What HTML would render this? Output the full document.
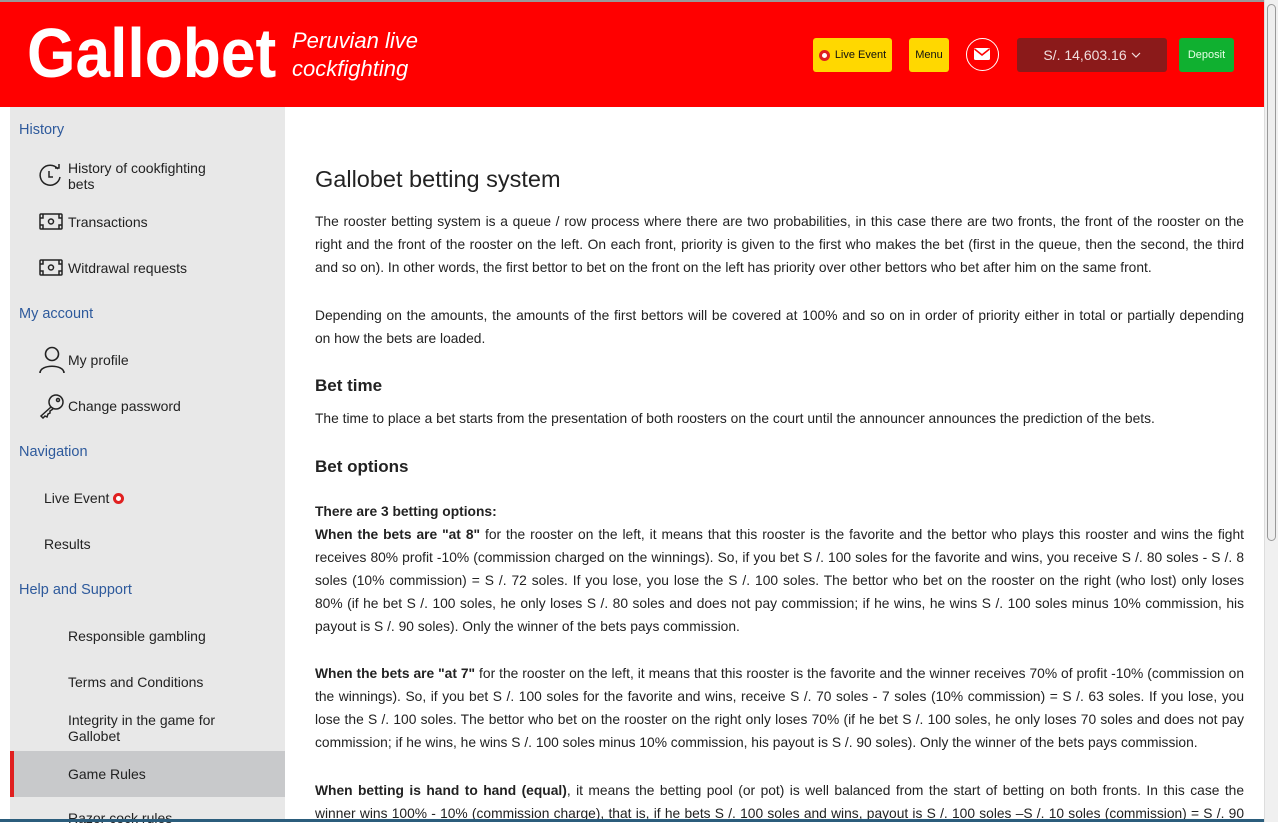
<!DOCTYPE html>
<html><head><meta charset="utf-8"><style>
*{margin:0;padding:0;box-sizing:border-box}
body{width:1278px;height:822px;overflow:hidden;background:#fff;font-family:"Liberation Sans",Arial,sans-serif;position:relative;color:#222}
.top{position:absolute;left:0;top:0;width:1278px;height:2px;background:#999}
.hdr{position:absolute;left:0;top:2px;width:1264px;height:105px;background:#ff0000}
.logo{position:absolute;left:27px;top:11px;color:#fff;font-size:70px;font-weight:bold;line-height:80px;transform:scaleX(0.89);transform-origin:0 0;white-space:nowrap}
.tag{position:absolute;left:292px;top:25px;color:#fff;font-style:italic;font-size:22px;line-height:28px}
.btn{position:absolute;border-radius:3px;font-size:11px;display:flex;align-items:center;justify-content:center}
.sb{position:absolute;left:1264px;top:0;width:14px;height:822px;background:#f0f0f0;border-left:1px solid #ddd}
.thumb{position:absolute;left:1267px;top:4px;width:9px;height:537px;border:1px solid #999;border-radius:5px;background:#eee}
.side{position:absolute;left:10px;top:107px;width:275px;height:715px;background:#e8e8e8}
.s{position:absolute;font-size:14px;color:#222;white-space:nowrap;line-height:16px}
.h{color:#2e5a9c;font-size:14.5px}
.active{position:absolute;left:10px;top:751px;width:275px;height:46px;background:#c8c9cb;border-left:4px solid #e02020}
.c{position:absolute;left:315px;width:929px;font-size:13.8px;color:#222}
.l{height:23px;line-height:23px;text-align:justify;text-align-last:justify;white-space:nowrap;overflow:hidden}
.l.e{text-align:left;text-align-last:left}
.bl{position:absolute;left:0;top:819px;width:1264px;height:3px;background:#2b5d7c}
</style></head><body>
<div class="top"></div>
<div class="hdr">
<div class="logo">Gallobet</div>
<div class="tag">Peruvian live<br>cockfighting</div>
</div>
<div class="btn" style="left:813px;top:38px;width:79px;height:34px;background:#ffd800;color:#111"><span style="display:inline-block;width:11px;height:11px;border-radius:50%;border:3px solid #e02020;background:#fff;margin-right:5px"></span>Live Event</div>
<div class="btn" style="left:909px;top:38px;width:40px;height:34px;background:#ffd800;color:#111">Menu</div>
<div style="position:absolute;left:966px;top:38px;width:33px;height:33px;border:1.5px solid #fff;border-radius:50%"><svg width="30" height="30" viewBox="0 0 30 30" style="position:absolute;left:0;top:0"><rect x="7" y="9" width="16" height="12" rx="1.5" fill="#fff"/><path d="M7.5 10 L15 16 L22.5 10" stroke="#f00" stroke-width="1.6" fill="none"/></svg></div>
<div class="btn" style="left:1017px;top:38px;width:150px;height:34px;background:#8b1a1a;color:#f0dede;font-size:14px">S/. 14,603.16 <svg width="10" height="8" viewBox="0 0 10 8" style="margin-left:4px"><path d="M1 2 L5 6 L9 2" stroke="#f0dede" stroke-width="1.2" fill="none"/></svg></div>
<div class="btn" style="left:1179px;top:38px;width:55px;height:34px;background:#10b030;color:#e8ffe8">Deposit</div>
<div class="sb"></div><div class="thumb"></div>
<div class="side"></div>
<div class="active"></div>
<div class="s h" style="left:19px;top:122px">History</div>
<svg style="position:absolute;left:38px;top:163px" width="26" height="26" viewBox="0 0 26 26" fill="none" stroke="#222" stroke-width="1.5"><path d="M20 6 A10 10 0 1 0 22 14"/><path d="M17 5 L21 5 L21 1"/><path d="M11 8 V14 H15"/></svg>
<div class="s" style="left:68px;top:160px">History of cookfighting<br>bets</div>
<svg style="position:absolute;left:39px;top:213px" width="24" height="17" viewBox="0 0 24 17" fill="none" stroke="#222" stroke-width="1.5"><rect x="1" y="1" width="22" height="15" rx="1"/><circle cx="12" cy="8.5" r="2.5"/><path d="M1 5 H4 V1 M20 1 V5 H23 M1 12 H4 V16 M20 16 V12 H23"/></svg>
<div class="s" style="left:68px;top:214px">Transactions</div>
<svg style="position:absolute;left:39px;top:259px" width="24" height="17" viewBox="0 0 24 17" fill="none" stroke="#222" stroke-width="1.5"><rect x="1" y="1" width="22" height="15" rx="1"/><circle cx="12" cy="8.5" r="2.5"/><path d="M1 5 H4 V1 M20 1 V5 H23 M1 12 H4 V16 M20 16 V12 H23"/></svg>
<div class="s" style="left:68px;top:260px">Witdrawal requests</div>
<div class="s h" style="left:19px;top:306px">My account</div>
<svg style="position:absolute;left:39px;top:346px" width="26" height="27" viewBox="0 0 26 27" fill="none" stroke="#222" stroke-width="1.6"><circle cx="13" cy="8" r="6.5"/><path d="M1 27 C1 18 25 18 25 27"/></svg>
<div class="s" style="left:68px;top:352px">My profile</div>
<svg style="position:absolute;left:39px;top:393px" width="26" height="26" viewBox="0 0 26 26" fill="none" stroke="#222" stroke-width="1.5"><circle cx="17" cy="9" r="7"/><circle cx="19" cy="7" r="1.5"/><path d="M12 14 L2 23 L4 25 L6 23 L8 24 L9 21 L11 20 L11 18 L14 16"/></svg>
<div class="s" style="left:68px;top:398px">Change password</div>
<div class="s h" style="left:19px;top:444px">Navigation</div>
<div class="s" style="left:44px;top:490px">Live Event <span style="display:inline-block;width:11px;height:11px;border-radius:50%;border:3px solid #e02020;background:#fff;vertical-align:-1px"></span></div>
<div class="s" style="left:44px;top:536px">Results</div>
<div class="s h" style="left:19px;top:582px">Help and Support</div>
<div class="s" style="left:68px;top:628px">Responsible gambling</div>
<div class="s" style="left:68px;top:674px">Terms and Conditions</div>
<div class="s" style="left:68px;top:712px">Integrity in the game for<br>Gallobet</div>
<div class="s" style="left:68px;top:766px">Game Rules</div>
<div class="s" style="left:68px;top:810px">Razor cock rules</div>

<div class="c" style="top:166px;font-size:23.5px;color:#222">Gallobet betting system</div>
<div class="c" style="top:210px">
<div class="l">The rooster betting system is a queue / row process where there are two probabilities, in this case there are two fronts, the front of the rooster on the</div>
<div class="l">right and the front of the rooster on the left. On each front, priority is given to the first who makes the bet (first in the queue, then the second, the third</div>
<div class="l e">and so on). In other words, the first bettor to bet on the front on the left has priority over other bettors who bet after him on the same front.</div>
</div>
<div class="c" style="top:304px">
<div class="l">Depending on the amounts, the amounts of the first bettors will be covered at 100% and so on in order of priority either in total or partially depending</div>
<div class="l e">on how the bets are loaded.</div>
</div>
<div class="c" style="top:376px;font-size:17px;font-weight:bold">Bet time</div>
<div class="c" style="top:407px"><div class="l e">The time to place a bet starts from the presentation of both roosters on the court until the announcer announces the prediction of the bets.</div></div>
<div class="c" style="top:457px;font-size:17px;font-weight:bold">Bet options</div>
<div class="c" style="top:500px">
<div class="l e"><b>There are 3 betting options:</b></div>
<div class="l"><b>When the bets are "at 8"</b> for the rooster on the left, it means that this rooster is the favorite and the bettor who plays this rooster and wins the fight</div>
<div class="l">receives 80% profit -10% (commission charged on the winnings). So, if you bet S /. 100 soles for the favorite and wins, you receive S /. 80 soles - S /. 8</div>
<div class="l">soles (10% commission) = S /. 72 soles. If you lose, you lose the S /. 100 soles. The bettor who bet on the rooster on the right (who lost) only loses</div>
<div class="l">80% (if he bet S /. 100 soles, he only loses S /. 80 soles and does not pay commission; if he wins, he wins S /. 100 soles minus 10% commission, his</div>
<div class="l e">payout is S /. 90 soles). Only the winner of the bets pays commission.</div>
</div>
<div class="c" style="top:662px">
<div class="l"><b>When the bets are "at 7"</b> for the rooster on the left, it means that this rooster is the favorite and the winner receives 70% of profit -10% (commission on</div>
<div class="l">the winnings). So, if you bet S /. 100 soles for the favorite and wins, receive S /. 70 soles - 7 soles (10% commission) = S /. 63 soles. If you lose, you</div>
<div class="l">lose the S /. 100 soles. The bettor who bet on the rooster on the right only loses 70% (if he bet S /. 100 soles, he only loses 70 soles and does not pay</div>
<div class="l e">commission; if he wins, he wins S /. 100 soles minus 10% commission, his payout is S /. 90 soles). Only the winner of the bets pays commission.</div>
</div>
<div class="c" style="top:779px">
<div class="l"><b>When betting is hand to hand (equal)</b>, it means the betting pool (or pot) is well balanced from the start of betting on both fronts. In this case the</div>
<div class="l">winner wins 100% - 10% (commission charge), that is, if he bets S /. 100 soles and wins, payout is S /. 100 soles –S /. 10 soles (commission) = S /. 90</div>
</div>
<div class="bl"></div>
</body></html>
